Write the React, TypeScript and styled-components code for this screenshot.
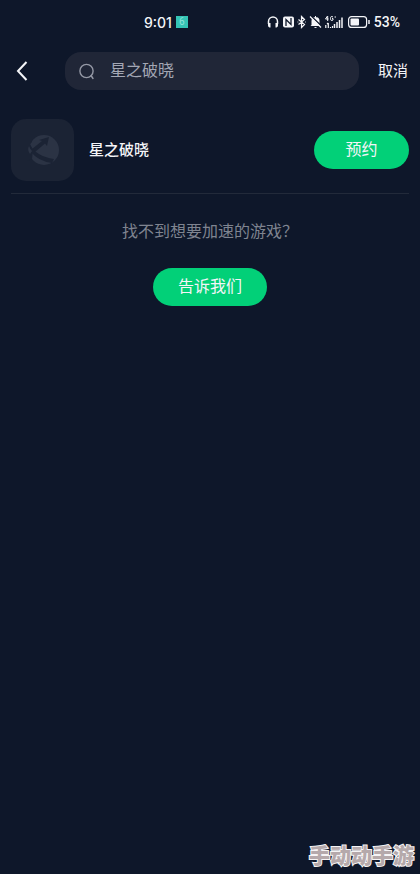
import React, { useState } from "react";
import styled, { createGlobalStyle } from "styled-components";

const GlobalStyle = createGlobalStyle`
  * { box-sizing: border-box; }
  body {
    margin: 0;
    background: #0e172a;
    font-family: Roboto, "Noto Sans CJK SC", sans-serif;
    color: #f4f5f8;
  }
  button, input { font: inherit; color: inherit; border: 0; margin: 0; padding: 0; }
  button { cursor: pointer; }
`;

const Screen = styled.div`
  min-height: 100vh;
  display: flex;
  flex-direction: column;
  background: #0e172a;
`;

const StatusBar = styled.div`
  display: flex;
  align-items: center;
  justify-content: space-between;
  height: 44px;
  padding: 0 20px 0 144px;
  font-size: 14px;
  font-weight: 500;
`;

const StatusGroup = styled.div<{ $gap: number }>`
  display: flex;
  align-items: center;
  gap: ${(p) => p.$gap}px;
`;

const Clock = styled.time`
  font-family: Inter, sans-serif;
`;

const Notice = styled.span`
  display: grid;
  place-items: center;
  width: 12px;
  height: 12px;
  background: #35c4b5;
  color: #8fe3da;
  font-size: 10px;
  font-weight: 400;
  line-height: 12px;
`;

const Header = styled.header`
  display: flex;
  align-items: center;
  padding: 8px 12px 0;
`;

const BackButton = styled.button`
  display: flex;
  align-items: center;
  width: 53px;
  height: 38px;
  background: none;
`;

const SearchBox = styled.label`
  display: flex;
  flex: 1;
  align-items: center;
  gap: 15px;
  min-width: 0;
  height: 38px;
  padding: 0 13px;
  border-radius: 16px;
  background: #202637;
  color: #a3a7b4;
`;

const SearchInput = styled.input`
  flex: 1;
  min-width: 0;
  height: 24px;
  background: transparent;
  outline: none;
  font-size: 16px;
  line-height: 24px;
`;

const CancelButton = styled.button`
  margin-left: 19px;
  background: none;
  font-size: 15px;
  line-height: 24px;
`;

const GameRow = styled.section`
  display: flex;
  align-items: center;
  gap: 15px;
  margin: 29px 11px 0;
  padding-bottom: 12px;
  border-bottom: 1px solid #222a3a;
`;

const GameIcon = styled.div`
  display: grid;
  place-items: center;
  width: 63px;
  height: 62px;
  border-radius: 15px;
  background: #1b2334;
`;

const GameName = styled.h1`
  flex: 1;
  margin: 0;
  font-size: 15px;
  font-weight: 500;
  line-height: 24px;
`;

const PillButton = styled.button<{ $width: number }>`
  width: ${(p) => p.$width}px;
  height: 38px;
  border-radius: 19px;
  background: #02d078;
  font-size: 16px;
  line-height: 24px;
`;

const Feedback = styled.section`
  display: flex;
  flex-direction: column;
  align-items: center;
  gap: 24px;
  padding-top: 26px;
`;

const Hint = styled.p`
  margin: 0;
  color: #7f8490;
  font-size: 16px;
  line-height: 24px;
`;

const Watermark = styled.footer`
  margin-top: auto;
  padding: 0 6px 4px;
  text-align: right;
  color: #b5a9ab;
  font-family: "Noto Sans CJK SC", sans-serif;
  font-size: 21px;
  font-weight: 900;
  line-height: 32px;
  -webkit-text-stroke: 2px #f6f4f5;
  paint-order: stroke fill;
`;

function StatusIcons() {
  return (
    <svg width="104" height="14" viewBox="0 0 104 14" fill="none" stroke="#f4f5f8" aria-hidden="true">
      <path d="M1.500 9V6.500a4.500 4.500 0 0 1 9 0V9" strokeWidth="1.500" />
      <path d="M1 8h2.500v4.500H2.500Q1 12 1 10.500zM11 8H8.500v4.500h1Q11 12 11 10.500z" fill="#f4f5f8" stroke="none" />
      <rect x="16" y="1.500" width="11" height="11" rx="2" fill="#f4f5f8" stroke="none" />
      <path d="M19 11V4.500l5 5V3" stroke="#0e172a" strokeWidth="1.300" />
      <path d="M31.500 4.500l6 5-3 3v-11l3 3-6 5M30.500 7h.8M38 7h.8" strokeWidth="1.200" />
      <path d="M44.500 10V6a4 4 0 0 1 8 0v4l1 1H43.500zM47 12h3q-1.500 2-3 0M48 1h1v2h-1z" fill="#f4f5f8" stroke="none" />
      <path d="M44 1l11 10.500" stroke="#0e172a" strokeWidth="1.500" />
      <path d="M43 1.500l11 11" strokeWidth="1.300" />
      <path d="M60.500 1L58.500 4h3M60.700 1v5M66 2q-2.500-1.500-2.500 1.500T66 5V3.500h-1M67.500 2h1.500" strokeWidth="1" />
      <path d="M58.800 10v3M61.300 8v5M60 9l1.300-1M63.500 12v1M65.500 11v2" strokeWidth="1.200" />
      <path d="M67.500 9v4M70 7v6M72.500 5v8M75 2.500V13" strokeWidth="1.500" />
      <rect x="81.600" y="1.600" width="18" height="10.800" rx="3" strokeWidth="1.200" />
      <rect x="83.500" y="3.500" width="8.500" height="7" rx="1" fill="#f4f5f8" stroke="none" />
      <path d="M102 5v4" strokeWidth="1.500" />
    </svg>
  );
}

function BackIcon() {
  return (
    <svg width="20" height="22" viewBox="0 0 20 22" fill="none" stroke="#f4f5f8" strokeWidth="2" aria-hidden="true">
      <path d="M14.500 2L6 11l8.500 9" />
    </svg>
  );
}

function SearchIcon() {
  return (
    <svg width="17" height="17" viewBox="0 0 17 17" fill="none" stroke="#9498a5" strokeWidth="1.400" strokeLinecap="round" aria-hidden="true">
      <circle cx="8.500" cy="8" r="6.600" />
      <path d="M13 12.500l2 3" />
    </svg>
  );
}

function PlanetIcon() {
  return (
    <svg width="32" height="32" viewBox="0 0 32 32" aria-hidden="true">
      <circle cx="17" cy="16" r="15" fill="#2b3344" />
      <g fill="#1b2334">
        <path d="M0 0H5V8L3 10L6 16L5 25L0 27Z" />
        <path d="M22 3L20 12L18 9.500L8 18L5 15L15 7L12 6Z" />
        <path d="M3 11Q9 22 27 25L25 29Q11 27 4 18Z" />
      </g>
      <path d="M2 12Q3 15 5 17L3 20Q0 16 2 12Z" fill="#2b3344" />
    </svg>
  );
}

export default function App() {
  const [query, setQuery] = useState("星之破晓");
  return (
    <>
      <GlobalStyle />
      <Screen>
        <StatusBar>
          <StatusGroup $gap={4}>
            <Clock>9:01</Clock>
            <Notice>6</Notice>
          </StatusGroup>
          <StatusGroup $gap={3}>
            <StatusIcons />
            <span>53%</span>
          </StatusGroup>
        </StatusBar>
        <Header>
          <BackButton aria-label="返回">
            <BackIcon />
          </BackButton>
          <SearchBox>
            <SearchIcon />
            <SearchInput aria-label="搜索游戏" value={query} onChange={(e) => setQuery(e.target.value)} />
          </SearchBox>
          <CancelButton>取消</CancelButton>
        </Header>
        <main>
          <GameRow>
            <GameIcon>
              <PlanetIcon />
            </GameIcon>
            <GameName>星之破晓</GameName>
            <PillButton $width={95}>预约</PillButton>
          </GameRow>
          <Feedback>
            <Hint>找不到想要加速的游戏？</Hint>
            <PillButton $width={114}>告诉我们</PillButton>
          </Feedback>
        </main>
        <Watermark>手动动手游</Watermark>
      </Screen>
    </>
  );
}
